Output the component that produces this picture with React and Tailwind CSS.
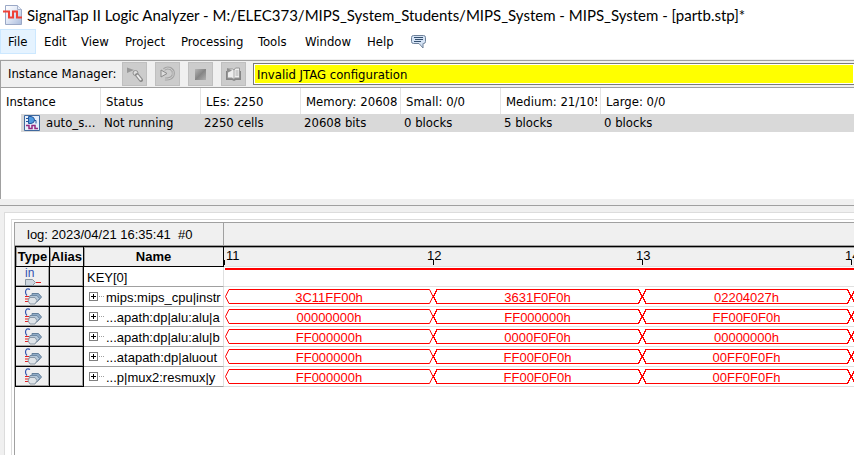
import React from "react";

const UI = "font-['DejaVu_Sans_Condensed','DejaVu_Sans',sans-serif]";

const MENUS = [
  { label: "File", cls: "w-[36px] border-[#cce8ff] bg-[#e5f3ff]" },
  { label: "Edit", cls: "w-[37px] border-transparent" },
  { label: "View", cls: "w-[44px] border-transparent" },
  { label: "Project", cls: "w-[56px] border-transparent" },
  { label: "Processing", cls: "w-[77px] border-transparent" },
  { label: "Tools", cls: "w-[47px] border-transparent" },
  { label: "Window", cls: "w-[62px] border-transparent" },
  { label: "Help", cls: "w-[41px] border-transparent" },
];

const SIGNALS = [
  { name: "mips:mips_cpu|instr", values: ["3C11FF00h", "3631F0F0h", "02204027h"] },
  { name: "...apath:dp|alu:alu|a", values: ["00000000h", "FF000000h", "FF00F0F0h"] },
  { name: "...apath:dp|alu:alu|b", values: ["FF000000h", "0000F0F0h", "00000000h"] },
  { name: "...atapath:dp|aluout", values: ["FF000000h", "FF00F0F0h", "00FF0F0Fh"] },
  { name: "...p|mux2:resmux|y", values: ["FF000000h", "FF00F0F0h", "00FF0F0Fh"] },
];

const COLUMNS = ["Instance", "Status", "LEs: 2250", "Memory: 20608", "Small: 0/0", "Medium: 21/105", "Large: 0/0"];
const CELLS = ["Not running", "2250 cells", "20608 bits", "0 blocks", "5 blocks", "0 blocks"];

function AppIcon() {
  return (
    <svg width="20" height="20" viewBox="0 0 20 20" aria-hidden="true">
      <defs>
        <linearGradient id="page" x1="0" y1="0" x2="1" y2="1">
          <stop offset="0" stopColor="#fff" />
          <stop offset=".4" stopColor="#e6ecf8" />
          <stop offset="1" stopColor="#a9bbdc" />
        </linearGradient>
      </defs>
      <path d="M2.500.5h12l4 4v15h-16z" fill="url(#page)" stroke="#9aa8c6" />
      <path d="M14.500.5v4h4" fill="#e8eefa" stroke="#a9b5cc" />
      <path d="M0 6.500h6v6h4v-6h4v6h5" fill="none" stroke="#ee4238" strokeWidth="2" />
    </svg>
  );
}

function ChatIcon() {
  return (
    <svg width="15" height="14" viewBox="0 0 15 14" aria-hidden="true">
      <path d="M2.500.5h10q2 0 2 2v4q0 2-2 2h-.5v4.500l-4-4.500H2.500q-2 0-2-2v-4q0-2 2-2z" fill="#d5e3f5" stroke="#6d8099" />
      <path d="M3 2.500h9M4 4.500h8M3 6.500h7" stroke="#34506f" />
    </svg>
  );
}

function SearchRunIcon() {
  return (
    <svg width="17" height="16" viewBox="0 0 17 16" aria-hidden="true">
      <path d="M1 1.500l7 2.500-7 3z" fill="#999" />
      <circle cx="9.500" cy="7" r="2.500" fill="#ddd" stroke="#929292" />
      <path d="M11 9l4 5" stroke="#8b8b8b" strokeWidth="4" strokeLinecap="round" />
      <path d="M11 9l4 5" stroke="#eee" strokeWidth="2" />
    </svg>
  );
}

function LoopIcon() {
  return (
    <svg width="17" height="16" viewBox="0 0 17 16" aria-hidden="true">
      <path d="M5 3.500Q8 1 11.500 2.500 15.500 5 14 9.500 12 13.500 6 13" fill="none" stroke="#a4a4a4" strokeWidth="3" />
      <path d="M5 3.500Q8 1 11.500 2.500 15.500 5 14 9.500 12 13.500 6 13" fill="none" stroke="#d2d2d2" />
      <path d="M2 4l6 3.500-6 3.500z" fill="#ddd" stroke="#8b8b8b" />
    </svg>
  );
}

function StopIcon() {
  return (
    <svg width="17" height="16" viewBox="0 0 17 16" aria-hidden="true">
      <defs>
        <linearGradient id="stop" x1="0" y1="0" x2="1" y2="1">
          <stop offset="0" stopColor="#b5b5b5" />
          <stop offset=".5" stopColor="#858585" />
          <stop offset="1" stopColor="#b0b0b0" />
        </linearGradient>
      </defs>
      <path d="M3 3h11v11H3z" fill="url(#stop)" />
    </svg>
  );
}

function BookIcon() {
  return (
    <svg width="17" height="16" viewBox="0 0 17 16" aria-hidden="true">
      <path d="M1 5v9h6l2 1 2-1h5V5z" fill="#858585" />
      <path d="M2.500 3h5l1.500 1 1.500-2h4v10H10l-1.500 1-1.500-1H2.500z" fill="#eee" stroke="#979797" />
      <path d="M9 4v9M10.500 5h3M10.500 7h3M10.500 9h3" stroke="#aaa" />
      <path d="M2 2l5 2.500L2 7z" fill="#909090" />
    </svg>
  );
}

function InstanceIcon() {
  return (
    <svg width="16" height="16" viewBox="0 0 16 16" aria-hidden="true">
      <path d="M.5.5h15v15H.5z" fill="#e6eefa" stroke="#40699e" />
      <path d="M2 3.500h3M2 6.500h3M10 5.500h2v3" stroke="#24569b" fill="none" />
      <path d="M4.500 1.500h2.500Q10.500 2 10.500 5t-3.500 3.500H4.500z" fill="#4f9ae0" stroke="#24569b" />
      <path d="M2 10.500h3v3h3v-3h3v3h3" stroke="#94297f" strokeWidth="1.500" fill="none" />
    </svg>
  );
}

function InputPinIcon() {
  return (
    <svg className="shrink-0" width="17" height="7" viewBox="0 0 17 7" aria-hidden="true">
      <path d="M1.500.5h7l3 3-3 3h-7z" fill="#ced7df" stroke="#8995a0" />
      <path d="M12 3.500h5" stroke="#e01818" />
    </svg>
  );
}

function BusIcon() {
  return (
    <svg className="shrink-0" width="18" height="17" viewBox="0 0 18 17" aria-hidden="true">
      <path d="M6 1.500Q4.500.5 3 1 1.500 2 1.500 4T3 7.500" fill="none" stroke="#3556b0" strokeWidth="1.200" />
      <path d="M1 8.500h4M1 11h4M1 13.500h4" stroke="#e02020" />
      <path d="M8 5.500h6.500l3 3.500-3 3.500H8z" fill="#8fabc6" stroke="#64809b" />
      <path d="M6 7.500h7l2.500 3-2.500 3.500H6l-1-3z" fill="#b4c8da" stroke="#7089a2" />
      <path d="M5.500 9.500H11l2 3-2 3.500H6L4 13z" fill="#dfe4e8" stroke="#8b99a6" />
    </svg>
  );
}

function Segment({ value }) {
  return (
    <div className="grid h-[17px] w-[209px] shrink-0 justify-items-center first:w-[208px]">
      <svg className="col-start-1 row-start-1 w-full" height="15" viewBox="0 0 209 15" preserveAspectRatio="none" shapeRendering="crispEdges" aria-hidden="true">
        <path d="M.5 7.500L4 .5H205.500L209 7.500L205.500 14.500H4z" fill="none" stroke="#f00" />
      </svg>
      <span className="col-start-1 row-start-1 leading-[17px] text-[#f00]">{value}</span>
    </div>
  );
}

function ToolButton({ label, children }) {
  return (
    <button type="button" aria-label={label} className="grid h-6 w-[25px] shrink-0 place-items-center border border-[#bfbfbf] bg-[#cccccc]">
      {children}
    </button>
  );
}

function TypeCell({ children }) {
  return (
    <td className="border-r border-b border-black bg-[#f0f0f0] p-0 shadow-[inset_-1px_-1px_0_#a0a0a0]">
      <div className="flex h-[19px] flex-col items-center justify-center overflow-hidden">{children}</div>
    </td>
  );
}

export default function App() {
  return (
    <div className={`flex min-h-screen flex-col overflow-hidden bg-white text-[13px] text-black ${UI}`}>
      <header>
        <div className="flex h-[29px] items-center gap-1 pl-[3px]">
          <AppIcon />
          <h1 className="pt-px font-[Lato,sans-serif] text-[15px] whitespace-nowrap">
            SignalTap II Logic Analyzer - M:/ELEC373/MIPS_System_Students/MIPS_System - MIPS_System - [partb.stp]*
          </h1>
        </div>
        <nav className="flex h-[25px]">
          {MENUS.map((m) => (
            <button key={m.label} type="button" className={`border pl-[7px] text-left whitespace-nowrap ${m.cls}`}>
              {m.label}
            </button>
          ))}
          <button type="button" aria-label="Feedback" className="pl-[11px]">
            <ChatIcon />
          </button>
        </nav>
      </header>

      <section className="mt-[6px] h-[139px] overflow-hidden border-t border-l border-[#a0a0a0] shadow-[0_-1px_0_#f0f0f0]">
        <div className="flex h-[27px] items-center border-b border-[#a0a0a0] bg-[#f0f0f0] pl-[7px]">
          <label htmlFor="jtag" className="w-[114px] shrink-0">Instance Manager:</label>
          <div className="flex gap-2">
            <ToolButton label="Run analysis"><SearchRunIcon /></ToolButton>
            <ToolButton label="Autorun analysis"><LoopIcon /></ToolButton>
            <ToolButton label="Stop analysis"><StopIcon /></ToolButton>
            <ToolButton label="Read data"><BookIcon /></ToolButton>
          </div>
          <input id="jtag" readOnly defaultValue="Invalid JTAG configuration" className="ml-[7px] h-[22px] min-w-0 flex-1 border border-r-0 border-[#7a7a7a] bg-[#ffff00] pl-[3px] shadow-[inset_0_0_0_1px_#fff] outline-none" />
        </div>
        <table className="w-full table-fixed border-collapse text-left">
          <colgroup>
            <col className="w-[20px]" />
            <col className="w-[80px]" />
            <col className="w-[100px]" />
            <col className="w-[100px]" />
            <col className="w-[100px]" />
            <col className="w-[100px]" />
            <col className="w-[100px]" />
            <col />
          </colgroup>
          <thead>
            <tr className="h-[26px]">
              {COLUMNS.map((c, i) => (
                <th key={c} colSpan={i === 0 ? 2 : 1} className="p-0 font-normal">
                  <div className={`h-[26px] overflow-hidden pl-[5px] leading-[27px] whitespace-nowrap ${i < 6 ? "border-r border-[#e5e5e5]" : ""}`}>
                    <div className="mr-[3px] overflow-hidden">{c}</div>
                  </div>
                </th>
              ))}
            </tr>
          </thead>
          <tbody>
            <tr className="h-[18px]">
              <td className="p-0" />
              <td className="bg-[#d9d9d9] p-0">
                <div className="flex h-[18px] items-center gap-[6px] pl-[3px]">
                  <InstanceIcon />
                  auto_s...
                </div>
              </td>
              {CELLS.map((c, i) => (
                <td key={i} className="bg-[#d9d9d9] p-0 pl-[3px] leading-[18px] whitespace-nowrap">{c}</td>
              ))}
            </tr>
          </tbody>
        </table>
      </section>

      <div className="h-[7px] border-b border-[#a0a0a0] bg-[#f0f0f0]" />

      <main className="flex flex-1 flex-col bg-[#f0f0f0] pt-[6px] pl-1">
        <div className="flex flex-1 flex-col border-t border-l border-[#dcdcdc] bg-white pt-[6px] pl-[6px]">
          <div className="flex flex-1 flex-col border-t border-l border-[#dcdcdc] pt-[2px] pl-[2px]">
            <div className="flex-1 overflow-hidden border-t border-l border-[#a0a0a0] font-['Liberation_Sans',Arial,sans-serif] text-[13px]">
              <div className="flex h-[23px] border-b border-[#a0a0a0] bg-[#f0f0f0] leading-[23px]">
                <div className="w-[209px] shrink-0 border-r border-[#a0a0a0] pl-3 whitespace-pre">log: 2023/04/21 16:35:41  #0</div>
              </div>
              <div className="flex border-t border-black">
                <table className="w-[209px] shrink-0 table-fixed border-separate border-spacing-0 border-l border-black">
                  <colgroup>
                    <col className="w-[34px]" />
                    <col className="w-[34px]" />
                    <col className="w-[140px]" />
                  </colgroup>
                  <thead>
                    <tr>
                      {["Type", "Alias", "Name"].map((h) => (
                        <th key={h} className="border-r border-b border-black bg-[#f0f0f0] p-0 shadow-[inset_1px_1px_0_#a0a0a0]">
                          <div className="flex h-[19px] items-center justify-center pt-px">{h}</div>
                        </th>
                      ))}
                    </tr>
                  </thead>
                  <tbody>
                    <tr>
                      <TypeCell>
                        <span className="w-[15px] text-[12px] leading-[11px] text-[#3050b0]">in</span>
                        <InputPinIcon />
                      </TypeCell>
                      <TypeCell />
                      <td className="border-r border-b border-[#a0a0a0] border-r-[#e0e0e0] p-0">
                        <div className="flex h-[19px] items-center pt-[2px] pl-[3px]">KEY[0]</div>
                      </td>
                    </tr>
                    {SIGNALS.map((s) => (
                      <tr key={s.name}>
                        <TypeCell><BusIcon /></TypeCell>
                        <TypeCell />
                        <td className="border-r border-b border-[#a0a0a0] border-r-[#e0e0e0] p-0">
                          <div className="flex h-[19px] items-center pl-[5px]">
                            <button type="button" aria-label={`Expand ${s.name}`}>
                              <svg className="block" width="16" height="9" viewBox="0 0 16 9" shapeRendering="crispEdges" aria-hidden="true">
                                <path d="M.5.5h8v8h-8z" fill="#fff" stroke="#808080" />
                                <path d="M2 4.500h5M4.500 2v5" stroke="#000" />
                                <path d="M10 4.500h6" stroke="#a0a0a0" strokeDasharray="1 1" />
                              </svg>
                            </button>
                            <span className="min-w-0 flex-1 overflow-hidden pt-[2px] pl-px leading-[17px] whitespace-nowrap">{s.name}</span>
                          </div>
                        </td>
                      </tr>
                    ))}
                  </tbody>
                </table>
                <div className="min-w-0 flex-1 overflow-hidden">
                  <div className="flex h-[20px] border-t border-b border-t-[#a0a0a0] border-b-[#e0e0e0] bg-[#f0f0f0]">
                    {["11", "12", "13", "14"].map((t, i) => (
                      <div key={t} className="relative w-[209px] shrink-0">
                        <span className={i === 0 ? "absolute top-0 left-[2px] leading-4" : "absolute top-0 left-[-6px] leading-4"}>{t}</span>
                        <span className="absolute top-[12px] left-0 h-[5px] w-px bg-black" />
                      </div>
                    ))}
                  </div>
                  <div className="h-5 border-b border-[#e0e0e0] pt-px pl-px">
                    <div className="h-[2px] bg-[#f00]" />
                  </div>
                  {SIGNALS.map((s) => (
                    <div key={s.name} className="flex h-5 border-b border-[#e0e0e0] pt-[2px] pl-px">
                      {s.values.map((v, i) => <Segment key={i} value={v} />)}
                      <Segment value="" />
                    </div>
                  ))}
                </div>
              </div>
            </div>
          </div>
        </div>
      </main>
    </div>
  );
}
